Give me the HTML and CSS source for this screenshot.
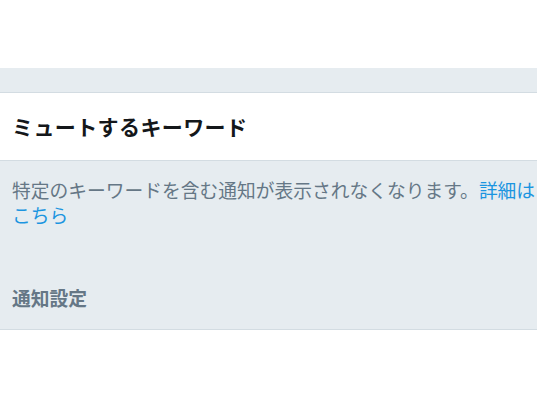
FILE: index.html
```html
<!DOCTYPE html>
<html lang="ja">
<head>
<meta charset="utf-8">
<link rel="stylesheet" href="styles.css">
</head>
<body>
<div class="page">
  <div class="top"></div>
  <div class="band"></div>
  <div class="title-row">
    <h1 class="title">ミュートするキーワード</h1>
  </div>
  <div class="info">
    <p class="desc">特定のキーワードを含む通知が表示されなくなります。<a class="link" href="#">詳細は<br>こちら</a></p>
    <h2 class="section">通知設定</h2>
  </div>
  <div class="bottom"></div>
</div>
</body>
</html>
```
FILE: styles.css
```css
html, body {
  margin: 0;
  padding: 0;
  background: #ffffff;
}
body {
  font-family: "Noto Sans CJK JP", "Noto Sans", sans-serif;
  overflow: hidden;
  width: 537px;
  height: 403px;
}
.page {
  display: flex;
  flex-direction: column;
}
.top {
  height: 68px;
  background: #ffffff;
}
.band {
  height: 24px;
  background: #e6ecf0;
  border-bottom: 1px solid #d3dce2;
}
.title-row {
  height: 67px;
  background: #ffffff;
  display: flex;
  align-items: center;
  padding-left: 12px;
  border-bottom: 1px solid #d3dce2;
}
.title {
  margin: 0;
  font-size: 21px;
  font-weight: 700;
  color: #14171a;
  letter-spacing: 0.4px;
  line-height: 25px;
}
.info {
  background: #e6ecf0;
  padding: 16px 0 19px 12px;
  border-bottom: 1px solid #d3dce2;
}
.desc {
  margin: 0;
  font-size: 18.75px;
  line-height: 25px;
  color: #657786;
  white-space: nowrap;
}
.link {
  color: #1b95e0;
  text-decoration: none;
}
.section {
  margin: 58px 0 0 0;
  font-size: 18.75px;
  line-height: 25px;
  font-weight: 700;
  color: #657786;
}
.bottom {
  flex: 1;
  background: #ffffff;
}
```
